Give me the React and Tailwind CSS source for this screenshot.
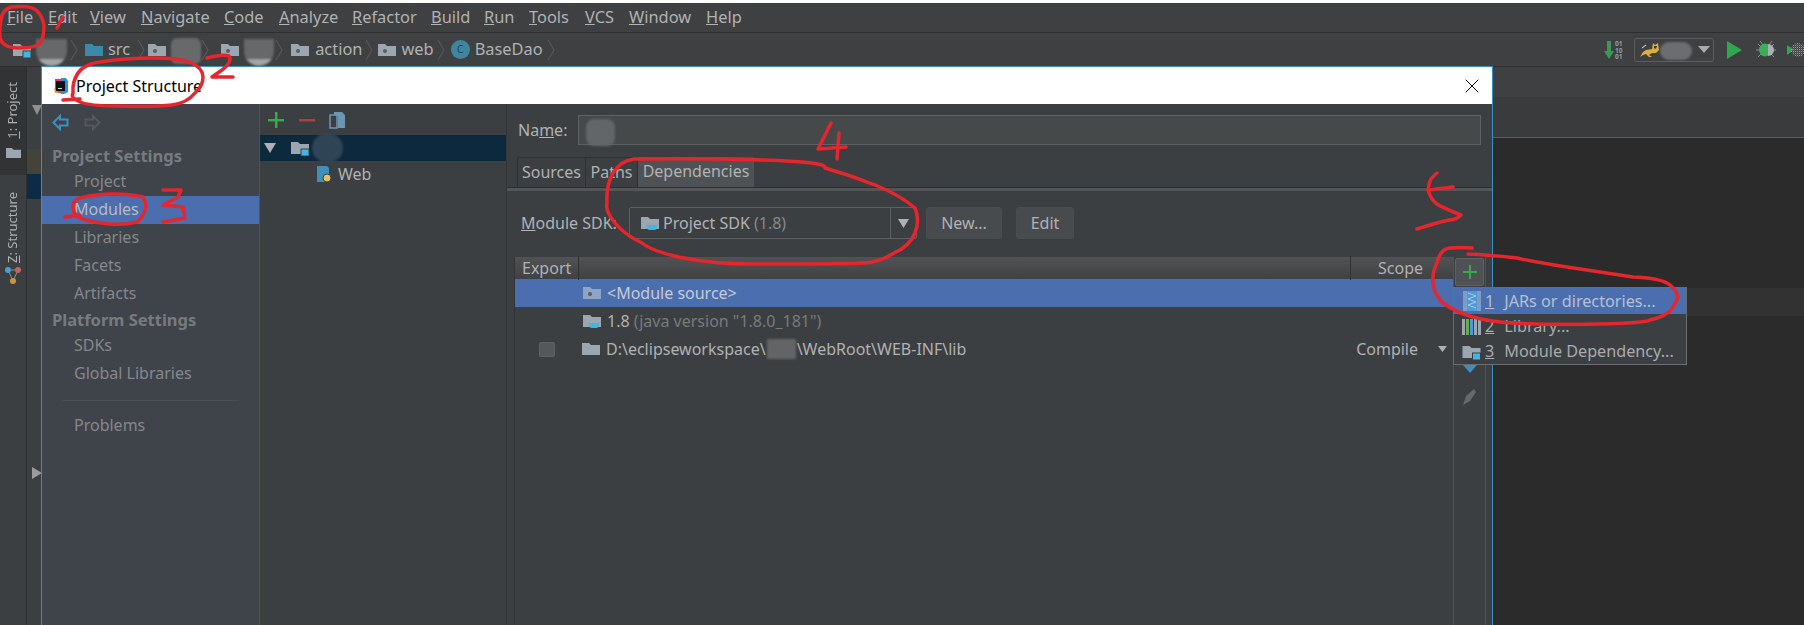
import { X } from "lucide-react";

const FONT = "font-['Noto_Sans','Open_Sans',sans-serif]";

// folder icon, dot = module folder, cup = jdk folder, box = project folder
function Folder({ color = "#9aa7b0", box, cup, dot, w = 18 }) {
  return (
    <svg width={w} height="16" viewBox="0 0 18 16" className="shrink-0">
      <path d="M0 2h7l2 2h9v10H0z" fill={color} />
      {dot && <circle cx="7" cy="9" r="2" fill="#3c3f41" opacity="0.7" />}
      {cup && <path d="M6 10h10v2a3 3 0 0 1-3 3H9a3 3 0 0 1-3-3z" fill="#40b6e0" />}
      {box && <rect x="10" y="9" width="8" height="7" fill="#40b6e0" stroke="#3c3f41" />}
    </svg>
  );
}

function Chevron() {
  return (
    <svg width="8" height="22" viewBox="0 0 8 22" className="shrink-0">
      <path d="M1 1l6 10-6 10" fill="none" stroke="#55585a" strokeWidth="1.2" />
    </svg>
  );
}

function Blob({ className }) {
  return <div className={`blur-[1px] ${className}`} />;
}

function Menu() {
  const items = [
    ["F", "ile", 41],
    ["E", "dit", 42],
    ["V", "iew", 51],
    ["N", "avigate", 83],
    ["C", "ode", 55],
    ["A", "nalyze", 73],
    ["R", "efactor", 79],
    ["B", "uild", 53],
    ["R", "un", 45],
    ["T", "ools", 56],
    ["V", "CS", 44],
    ["W", "indow", 77],
    ["H", "elp", 50],
  ];
  return (
    <div className="flex h-[30px] items-center bg-[#3e4042] pl-[7px] border-b border-[#2e2f30] text-[16.4px] text-[#b0b2b3]">
      {items.map(([a, b, w], i) => (
        <span key={i} className="shrink-0" style={{ width: w }}>
          <u>{a}</u>
          {b}
        </span>
      ))}
    </div>
  );
}

function Toolbar() {
  return (
    <div className="flex h-[34px] items-center justify-between bg-[#3e4042] pl-[12px] border-b border-[#2e2f30] text-[16.4px] text-[#b0b2b3]">
      <div className="flex items-center">
        <Folder box w={20} />
        <Blob className="w-[31px] h-[27px] rounded-b-full rounded-t-[8px] ml-[4px] mr-[3px] mt-[5px] bg-gradient-to-b from-[#66686a] from-75% to-[#a2a4a6] to-75%" />
        <Chevron />
        <div className="ml-[7px]"><Folder color="#3d88ad" /></div>
        <span className="ml-[5px] mr-[7px]">src</span>
        <Chevron />
        <div className="ml-[3px]"><Folder dot /></div>
        <Blob className="w-[30px] h-[26px] rounded-[6px] bg-[#67696b] ml-[5px] mt-[3px]" />
        <Chevron />
        <div className="ml-[12px]"><Folder dot /></div>
        <Blob className="w-[30px] h-[27px] rounded-b-full rounded-t-[8px] ml-[5px] mr-[1px] mt-[5px] bg-gradient-to-b from-[#66686a] from-75% to-[#a2a4a6] to-75%" />
        <Chevron />
        <div className="ml-[8px]"><Folder dot /></div>
        <span className="ml-[6px] mr-[3px]">action</span>
        <Chevron />
        <div className="ml-[5px]"><Folder dot /></div>
        <span className="ml-[5px] mr-[3px]">web</span>
        <Chevron />
        <div className="ml-[6px] flex h-[19px] w-[19px] items-center justify-center rounded-full bg-[#3e86a0] text-[10px] text-[#2b3e48]">C</div>
        <span className="ml-[5px] mr-[4px]">BaseDao</span>
        <Chevron />
      </div>
      <div className="flex items-center">
        <svg width="22" height="22" viewBox="0 0 22 22">
          <path d="M3 2h4v10h3l-5 8-5-8h3z" fill="#3a9a55" />
          <text x="11" y="7" fontSize="6.5" fontWeight="700" fill="#9a9c9e">01</text>
          <text x="11" y="13.5" fontSize="6.5" fontWeight="700" fill="#9a9c9e">10</text>
          <text x="11" y="20" fontSize="6.5" fontWeight="700" fill="#9a9c9e">01</text>
        </svg>
        <div className="ml-[8px] flex h-[24px] w-[80px] items-center rounded-[3px] border border-[#5a5c5e] pl-[5px]">
          <svg width="20" height="16" viewBox="0 0 20 16" className="shrink-0">
            <path d="M0 15l3-5 3-2 6-1 1-6 2 2 3-2 1 7-3 3-4 0-3 2 3 2-3 0-3-3-3 1z" fill="#dcae3c" />
            <path d="M14 4l3 0-1 3-2-1z" fill="#3c3f41" />
            <path d="M2 6l4-3" stroke="#e8e8e8" strokeWidth="1" />
          </svg>
          <Blob className="w-[32px] h-[18px] rounded-full bg-[#6b6d70] mt-[3px]" />
          <svg width="12" height="7" viewBox="0 0 12 7" className="ml-[6px]">
            <path d="M0 0h12L6 7z" fill="#a9abad" />
          </svg>
        </div>
        <svg width="15" height="18" viewBox="0 0 15 18" className="ml-[13px]">
          <path d="M0 0l15 9-15 9z" fill="#2fa650" />
        </svg>
        <svg width="20" height="20" viewBox="0 0 20 20" className="ml-[14px]">
          <path d="M4 1l3 4M16 1l-3 4M0 10h3M17 10h3M2 17l3-3M18 17l-3-3M2 4l3 3M18 4l-3 3" stroke="#8d8f91" strokeWidth="1" />
          <ellipse cx="9" cy="10" rx="6" ry="6.5" fill="#3cae58" />
          <path d="M12 4a6 6 0 0 1 0 12z" fill="#aab0b4" />
        </svg>
        <svg width="17" height="18" viewBox="0 0 17 18" className="ml-[11px]">
          <defs>
            <pattern id="cov" width="2" height="2" patternUnits="userSpaceOnUse">
              <rect width="1" height="1" fill="#9a9c9e" />
              <rect x="1" y="1" width="1" height="1" fill="#5c5e60" />
            </pattern>
          </defs>
          <path d="M0 4l7 5-7 5z" fill="#2fa650" />
          <circle cx="11" cy="9" r="7" fill="url(#cov)" />
        </svg>
      </div>
    </div>
  );
}

function SideItem({ children, active, head }) {
  if (head)
    return (
      <div className="flex h-[24px] items-center pl-[10px] text-[16.5px] font-bold text-[#787b7e]">
        {children}
      </div>
    );
  return (
    <div
      className={`flex h-[28px] items-center pb-[2px] pl-[32px] text-[16px] ${
        active ? "bg-[#4b6eaf] text-[#b9bcc0]" : "text-[#85888b]"
      }`}
    >
      {children}
    </div>
  );
}

function Sidebar() {
  return (
    <div className="w-[218px] shrink-0 bg-[#3f434a] border-r border-[#505356]">
      <div className="flex h-[37px] items-center pl-[10px] gap-[15px]">
        <svg width="17" height="17" viewBox="0 0 17 17">
          <path d="M8 2L1.500 8.500 8 15v-3.500h7.500v-6H8z" fill="#3f434a" stroke="#3f8fbb" strokeWidth="2" />
        </svg>
        <svg width="17" height="17" viewBox="0 0 17 17">
          <path d="M9 2l6.500 6.500L9 15v-3.500H1.500v-6H9z" fill="#3f434a" stroke="#55585c" strokeWidth="2" />
        </svg>
      </div>
      <div className="pt-[3px]">
        <SideItem head>Project Settings</SideItem>
        <SideItem>Project</SideItem>
        <SideItem active>Modules</SideItem>
        <SideItem>Libraries</SideItem>
        <SideItem>Facets</SideItem>
        <SideItem>Artifacts</SideItem>
        <SideItem head>Platform Settings</SideItem>
        <SideItem>SDKs</SideItem>
        <SideItem>Global Libraries</SideItem>
        <div className="mx-[21px] mt-[12px] mb-[11px] border-t border-[#4c5055]" />
        <SideItem>Problems</SideItem>
      </div>
    </div>
  );
}

function ModuleTree() {
  return (
    <div className="w-[247px] shrink-0 bg-[#3c3f41] border-r border-[#323436]">
      <div className="flex h-[31px] items-center pl-[8px]">
        <svg width="16" height="16" viewBox="0 0 16 16">
          <path d="M7 0h2.500v7H16v2.500H9.500V16H7V9.500H0V7h7z" fill="#3ca84c" />
        </svg>
        <svg width="16" height="16" viewBox="0 0 16 16" className="ml-[15px]">
          <rect y="7" width="16" height="2.500" fill="#a8443f" />
        </svg>
        <svg width="18" height="18" viewBox="0 0 18 18" className="ml-[14px]">
          <path d="M5 1h8l3 3v13H9V5H5z" fill="#6b97b3" />
          <path d="M1 4h7v13H1z" fill="#3c3f41" stroke="#6b97b3" strokeWidth="1.500" />
        </svg>
      </div>
      <div className="flex h-[26px] items-center bg-[#0d293e] pl-[4px]">
        <svg width="12" height="10" viewBox="0 0 12 10">
          <path d="M0 0h12L6 10z" fill="#aeb0b2" />
        </svg>
        <div className="ml-[14px]"><Folder box w={20} /></div>
        <Blob className="ml-[2px] w-[31px] h-[30px] rounded-full bg-[#2f4555]" />
      </div>
      <div className="flex h-[26px] items-center pl-[56px] text-[16px] text-[#b0b2b3]">
        <svg width="16" height="18" viewBox="0 0 16 18" className="mr-[6px]">
          <path d="M1 1h10l2 2v14H1z" fill="#3f8fbb" />
          <circle cx="11" cy="13" r="4" fill="#e2c35c" stroke="#3c3f41" />
        </svg>
        Web
      </div>
    </div>
  );
}

function Dependencies() {
  return (
    <div className="flex-1 min-w-0 bg-[#3c3f41] text-[16px] text-[#b0b2b3]">
      {/* name */}
      <div className="mt-[11px] flex h-[30px] items-center pl-[11px] pr-[11px]">
        <span className="w-[60px]">
          Na<u>m</u>e:
        </span>
        <div className="flex h-full flex-1 items-center border border-[#5e6163] bg-[#45494a] pl-[7px]">
          <Blob className="w-[29px] h-[27px] rounded-[8px] bg-[#636668] mt-[4px]" />
        </div>
      </div>

      {/* tabs */}
      <div className="mt-[12px] flex h-[30px] pl-[10px]">
        <div className="flex w-[69px] items-center justify-center border border-b-0 border-[#2f3132] pb-[2px]">Sources</div>
        <div className="flex w-[52px] items-center justify-center border-r border-t border-[#2f3132] pb-[2px]">Paths</div>
        <div className="flex w-[116px] items-center justify-center bg-[#4e5254] pb-[2px]">Dependencies</div>
      </div>
      <div className="h-[4px] border-t border-[#2d2f30] bg-[#535557]" />

      {/* sdk */}
      <div className="mt-[16px] flex h-[32px] items-center pl-[14px]">
        <span className="w-[108px]">
          <u>M</u>odule SDK:
        </span>
        <div className="flex h-full w-[288px] items-center rounded-[2px] border border-[#5e6163] pl-[11px]">
          <Folder cup />
          <span className="ml-[4px] flex-1">
            Project SDK <span className="text-[#85888b]">(1.8)</span>
          </span>
          <div className="flex h-full w-[26px] items-center justify-center border-l border-[#5e6163]">
            <svg width="11" height="9" viewBox="0 0 11 9">
              <path d="M0 0h11L5.500 9z" fill="#aeb0b2" />
            </svg>
          </div>
        </div>
        <div className="ml-[9px] flex h-full w-[76px] items-center justify-center rounded-[3px] border border-[#4a4d4f] bg-[#484b4d]">New...</div>
        <div className="ml-[14px] flex h-full w-[58px] items-center justify-center rounded-[3px] border border-[#4a4d4f] bg-[#484b4d]">Edit</div>
      </div>

      {/* table */}
      <div className="mt-[18px] ml-[7px] flex h-[368px]">
        <div className="w-[939px] shrink-0 border-l border-[#323436]">
          <div className="flex h-[22px] items-center bg-gradient-to-b from-[#505254] to-[#3f4143]">
            <div className="w-[64px] border-r border-[#2f3132] pl-[7px]">Export</div>
            <div className="flex-1" />
            <div className="w-[103px] border-l border-[#2f3132] pl-[27px]">Scope</div>
          </div>
          <div className="flex h-[28px] items-center bg-[#4b6eaf] pl-[68px]">
            <Folder dot color="#8fa5c4" />
            <span className="ml-[6px] text-[#c4cbd6]">&lt;Module source&gt;</span>
          </div>
          <div className="flex h-[28px] items-center pl-[68px]">
            <Folder cup />
            <span className="ml-[6px]">
              1.8 <span className="text-[#777a7d]">(java version "1.8.0_181")</span>
            </span>
          </div>
          <div className="flex h-[28px] items-center">
            <div className="ml-[24px] h-[15px] w-[16px] rounded-[2px] border border-[#5e6163] bg-[#55585a]" />
            <div className="ml-[27px]"><Folder /></div>
            <span className="ml-[6px] flex items-center">
              D:\eclipseworkspace\
              <span className="mx-[1px] inline-block h-[20px] w-[29px] bg-[#626466] blur-[1px]" />
              \WebRoot\WEB-INF\lib
            </span>
            <span className="ml-auto">Compile</span>
            <svg width="9" height="6" viewBox="0 0 9 6" className="ml-[20px] mr-[6px]">
              <path d="M0 0h9L4.500 6z" fill="#aeb0b2" />
            </svg>
          </div>
        </div>
        <div className="flex w-[33px] flex-col items-center border-x border-[#505356]">
          <div className="mt-[1px] flex h-[28px] w-[29px] items-center justify-center rounded-[2px] border border-[#5e6163] bg-[#4e5254]">
            <svg width="14" height="14" viewBox="0 0 14 14">
              <path d="M6 0h2v6h6v2H8v6H6V8H0V6h6z" fill="#3ca84c" />
            </svg>
          </div>
          <svg width="14" height="8" viewBox="0 0 14 8" className="mt-[79px]">
            <path d="M0 0h14L7 8z" fill="#3f8fbb" />
          </svg>
          <svg width="16" height="18" viewBox="0 0 16 18" className="mt-[15px]">
            <path d="M1 17l3-9 8-7 2 3-6 9z" fill="#66696b" />
          </svg>
        </div>
      </div>
    </div>
  );
}

function AddMenu() {
  return (
    <div className="absolute left-[1453px] top-[287px] w-[234px] border border-[#6b6e70] bg-[#3c3f41] text-[16.2px] text-[#a9abad]">
      <div className="flex h-[26px] items-center bg-[#4b6eaf] pl-[9px] text-[#b5c0d2]">
        <svg width="18" height="20" viewBox="0 0 18 20" className="shrink-0">
          <rect x="0" width="4" height="20" fill="#7d9cc6" />
          <rect x="4" width="10" height="20" fill="#4f9ad6" />
          <path d="M5 2l8 3-8 3 8 3-8 3 8 3" fill="none" stroke="#a9cbe6" />
          <rect x="14" width="4" height="20" fill="#7d9cc6" />
        </svg>
        <span className="ml-[4px]"><u>1</u></span>
        <span className="ml-[10px]">JARs or directories...</span>
      </div>
      <div className="flex h-[25px] items-center pl-[8px]">
        <svg width="19" height="16" viewBox="0 0 19 16" className="shrink-0">
          <rect x="0" width="3" height="16" fill="#9aa7b0" />
          <rect x="4" width="3" height="16" fill="#6aab4f" />
          <rect x="8" width="3" height="16" fill="#4f9ad6" />
          <rect x="12" width="3" height="16" fill="#9aa7b0" />
          <rect x="16" width="3" height="16" fill="#9aa7b0" />
        </svg>
        <span className="ml-[4px]"><u>2</u></span>
        <span className="ml-[10px]">Library...</span>
      </div>
      <div className="flex h-[25px] items-center pl-[8px]">
        <Folder box w={19} />
        <span className="ml-[4px]"><u>3</u></span>
        <span className="ml-[10px]">Module Dependency...</span>
      </div>
    </div>
  );
}

// red pen scribbles on top of the screenshot
function Scribbles() {
  const lines = [
    "M11 7Q30 5 36 10T44 25Q44 38 40 43T19 48Q6 48 2 42T1 20Q2 10 11 7",
    "M63 17L57 28",
    "M207 58Q222 54 229 56Q233 61 222 70L212 77L233 77",
    "M100 62Q125 58 153 58T191 63Q203 68 203 77T195 93Q187 103 172 105T115 106Q90 106 80 102T73 93Q72 82 78 73T100 62",
    "M63 100L80 99",
    "M80 198Q95 194 113 194T143 197Q147 203 145 210T137 222Q125 225 110 224T80 218Q73 214 73 207T80 198",
    "M65 217L80 215",
    "M163 190L181 190L178 197L163 205L183 207L185 218L163 222",
    "M831 123L818 149L846 147",
    "M839 133L837 159",
    "M634 159Q700 158 764 160T825 168Q850 175 875 185T915 208Q920 220 915 233T894 253Q880 262 864 263T749 264Q715 264 684 258T642 243Q625 235 615 223T607 203Q606 185 613 173T634 159",
    "M1437 173Q1431 178 1430 181T1428 190L1453 187",
    "M1428 190Q1431 200 1437 204T1461 215Q1458 219 1450 220T1417 229",
    "M1472 248Q1460 247 1450 248T1437 263Q1432 272 1433 283T1443 303Q1455 312 1473 317T1513 323Q1555 325 1600 324T1650 320Q1668 316 1673 307T1678 297Q1676 288 1667 283T1633 277Q1600 272 1567 267T1517 258Q1490 255 1468 254",
  ];
  return (
    <svg className="pointer-events-none absolute inset-0" width="1804" height="625" viewBox="0 0 1804 625" fill="none">
      {lines.map((d, i) => (
        <path key={i} d={d} stroke="#e6252d" strokeWidth="3.5" strokeLinecap="round" strokeLinejoin="round" />
      ))}
    </svg>
  );
}

export default function App() {
  return (
    <div className={`relative flex h-[625px] w-[1804px] flex-col overflow-hidden bg-[#3c3f41] ${FONT}`}>
      <div className="h-[3px] bg-white" />
      <Menu />
      <Toolbar />

      {/* ide behind the dialog */}
      <div className="flex flex-1">
        <div className="flex w-[27px] shrink-0 flex-col items-center border-r border-[#2e2f30] bg-[#3c3f41] text-[13px] text-[#aeb0b2]">
          <div className="flex h-[108px] w-full flex-col items-center bg-[#313335] pt-[15px]">
            <span className="[writing-mode:vertical-rl] rotate-180"><u>1</u>: Project</span>
            <div className="mt-[6px]"><Folder w={15} /></div>
          </div>
          <span className="mt-[17px] [writing-mode:vertical-rl] rotate-180"><u>Z</u>: Structure</span>
          <svg width="16" height="18" viewBox="0 0 16 18" className="mt-[4px]">
            <path d="M3 3h10L8 14z" fill="none" stroke="#8d8f91" />
            <circle cx="3" cy="3" r="3" fill="#4f9ad6" />
            <circle cx="13" cy="3" r="3" fill="#c0665b" />
            <circle cx="8" cy="14" r="3" fill="#c89347" />
          </svg>
        </div>
        <div className="w-[14px] shrink-0 bg-[#3c3f41]">
          <svg width="10" height="10" viewBox="0 0 10 10" className="ml-[5px] mt-[38px]">
            <path d="M0 0h10L5 10z" fill="#8d8f91" />
          </svg>
          <div className="mt-[34px] h-[25px] bg-[#434339]" />
          <div className="h-[25px] bg-[#0d2b45]" />
          <svg width="10" height="12" viewBox="0 0 10 12" className="ml-[5px] mt-[268px]">
            <path d="M0 0l10 6-10 6z" fill="#9a9c9e" />
          </svg>
        </div>
        <div className="flex flex-1 flex-col">
          <div className="h-[30px] bg-[#3e4042]" />
          <div className="h-[41px] border-b border-[#5a5c5e] bg-[#393b3d]" />
          <div className="flex-1 bg-[#2b2b2b]">
            <div className="mt-[150px] h-[28px] bg-[#323232]" />
          </div>
        </div>
      </div>

      {/* project structure dialog */}
      <div className="absolute left-[41px] top-[66px] flex h-[559px] w-[1452px] flex-col border-x border-t border-[#3592c4]">
        <div className="flex h-[37px] items-center bg-white pl-[11px] pr-[8px] text-[16px] text-black">
          <svg width="15" height="16" viewBox="0 0 15 16" className="shrink-0">
            <path d="M2 1h6v14H2z" fill="#e0396f" />
            <path d="M8 0h5l2 3v11l-4 2H8z" fill="#2e8fe0" />
            <path d="M1 10l5 5H2z" fill="#f09a2a" />
            <rect x="3" y="3" width="9" height="10" fill="#111" />
            <rect x="5" y="10" width="4" height="1" fill="#ddd" />
          </svg>
          <span className="ml-[8px]">Project Structure</span>
          <X size={24} strokeWidth={1} className="ml-auto" />
        </div>
        <div className="flex flex-1 min-h-0">
          <Sidebar />
          <ModuleTree />
          <Dependencies />
        </div>
      </div>

      <AddMenu />
      <Scribbles />
    </div>
  );
}
